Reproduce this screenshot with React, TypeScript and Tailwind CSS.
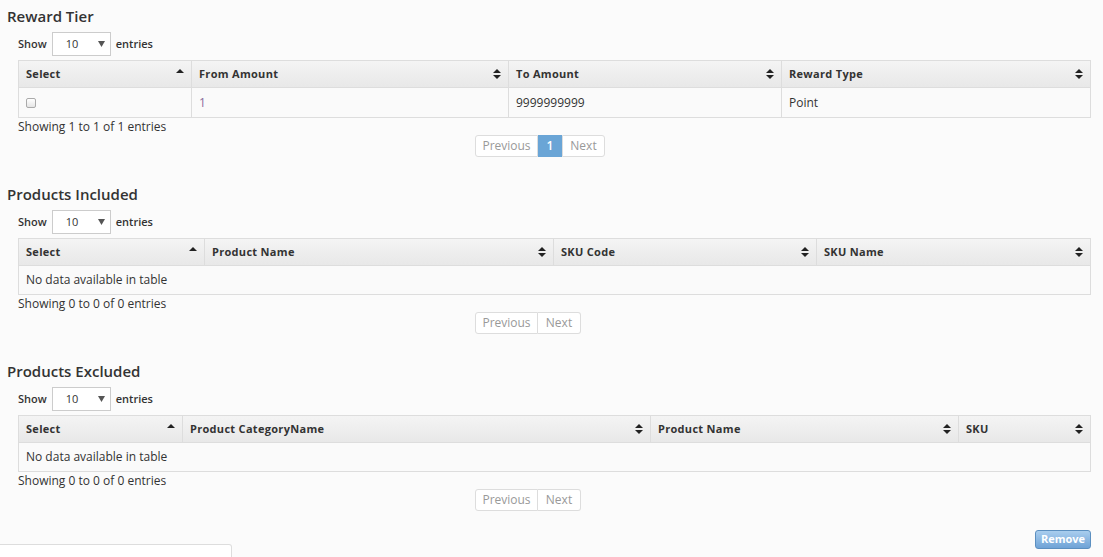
import React from "react";

const font = { fontFamily: '"Open Sans", "DejaVu Sans", sans-serif' };

function SortIcon({ both }: { both: boolean }) {
  return (
    <svg width="8" height="10" viewBox="0 0 8 10" className="shrink-0">
      <polygon points="0,4 8,4 4,0" fill="#222" />
      {both && <polygon points="0,6 8,6 4,10" fill="#222" />}
    </svg>
  );
}

type Col = { label: string; w: number };

function ShowEntries() {
  return (
    <div className="flex items-center h-[24px] ml-[18px] text-[11px] font-semibold text-[#333]">
      <span>Show</span>
      <div className="ml-[5px] w-[59px] h-[24px] border border-[#ccc] bg-white flex items-center justify-between px-[13px] pr-[5px] font-normal">
        <span>10</span>
        <svg width="7" height="6" viewBox="0 0 7 6">
          <polygon points="0,0 7,0 3.5,6" fill="#555" />
        </svg>
      </div>
      <span className="ml-[5px]">entries</span>
    </div>
  );
}

function Pager({ withPage }: { withPage: boolean }) {
  return (
    <div className="flex mt-[1px] ml-[475px]">
      <div className="flex h-[22px] text-[12px] text-[#999]">
        <div className="w-[63px] border border-[#ddd] rounded-l-[3px] flex items-center justify-center bg-white">
          Previous
        </div>
        {withPage && (
          <div className="w-[24px] bg-[#6aa5d6] text-white flex items-center justify-center font-semibold">
            1
          </div>
        )}
        <div
          className={
            "w-[43px] border border-[#ddd] rounded-r-[3px] flex items-center justify-center bg-white " +
            (withPage ? "" : "border-l-0")
          }
        >
          Next
        </div>
      </div>
    </div>
  );
}

function Section({
  title,
  cols,
  row,
  showing,
  withPage,
}: {
  title: string;
  cols: Col[];
  row: React.ReactNode;
  showing: string;
  withPage: boolean;
}) {
  return (
    <div>
      <h2 className="pl-[7px] h-[32px] flex items-center text-[15px] font-semibold text-[#333] leading-none">
        {title}
      </h2>
      <ShowEntries />
      <div className="ml-[18px] mr-[12px] mt-[4px] border border-[#ddd]">
        <div className="flex h-[27px] bg-gradient-to-b from-[#f4f4f4] to-[#e8e8e8] border-b border-[#ddd]">
          {cols.map((c, i) => (
            <div
              key={i}
              className={
                "flex items-center justify-between pl-[7px] pr-[7px] text-[11px] font-bold text-[#333] " +
                (i > 0 ? "border-l border-[#ddd] " : "") +
                (i === cols.length - 1 ? "flex-1" : "shrink-0")
              }
              style={i === cols.length - 1 ? undefined : { width: c.w }}
            >
              <span className="tracking-[0.3px]">{c.label}</span>
              <SortIcon both={i > 0} />
            </div>
          ))}
        </div>
        {row}
      </div>
      <div className="ml-[18px] mt-[1px] text-[12px] text-[#333] h-[15px] leading-[15px]">{showing}</div>
      <Pager withPage={withPage} />
    </div>
  );
}

export default function App() {
  const rewardRow = (
    <div className="flex h-[29px] bg-[#fafafa] text-[12px] text-[#333]">
      <div className="w-[172px] shrink-0 flex items-center pl-[7px]">
        <div className="w-[10px] h-[10px] border border-[#aaa] rounded-[2px] bg-gradient-to-b from-white to-[#e5e5e5]" />
      </div>
      <div className="w-[317px] shrink-0 flex items-center pl-[7px] border-l border-[#ddd] text-[#8a6c9c]">1</div>
      <div className="w-[273px] shrink-0 flex items-center pl-[7px] border-l border-[#ddd]">9999999999</div>
      <div className="flex-1 flex items-center pl-[7px] border-l border-[#ddd]">Point</div>
    </div>
  );
  const emptyRow = (
    <div className="flex h-[28px] items-center bg-[#fafafa] pl-[7px] text-[12px] text-[#333]">
      No data available in table
    </div>
  );
  return (
    <div className="w-[1103px] h-[557px] bg-[#fbfbfb] relative overflow-hidden" style={font}>
      <div className="flex flex-col gap-[21px]">
        <Section
          title="Reward Tier"
          cols={[
            { label: "Select", w: 172 },
            { label: "From Amount", w: 317 },
            { label: "To Amount", w: 273 },
            { label: "Reward Type", w: 0 },
          ]}
          row={rewardRow}
          showing="Showing 1 to 1 of 1 entries"
          withPage={true}
        />
        <Section
          title="Products Included"
          cols={[
            { label: "Select", w: 185 },
            { label: "Product Name", w: 349 },
            { label: "SKU Code", w: 263 },
            { label: "SKU Name", w: 0 },
          ]}
          row={emptyRow}
          showing="Showing 0 to 0 of 0 entries"
          withPage={false}
        />
        <Section
          title="Products Excluded"
          cols={[
            { label: "Select", w: 163 },
            { label: "Product CategoryName", w: 468 },
            { label: "Product Name", w: 308 },
            { label: "SKU", w: 0 },
          ]}
          row={emptyRow}
          showing="Showing 0 to 0 of 0 entries"
          withPage={false}
        />
      </div>
      <div className="flex justify-end pr-[12px] mt-[19px]">
        <button className="w-[56px] h-[19px] rounded-[3px] border border-[#5b8fc0] bg-gradient-to-b from-[#a9cdee] to-[#6fa3d6] text-white text-[11px] font-bold flex items-center justify-center">
          Remove
        </button>
      </div>
      <div className="absolute left-0 top-[544px] w-[232px] h-[20px] bg-white border border-[#ddd] border-l-0 rounded-tr-[3px]" />
    </div>
  );
}
